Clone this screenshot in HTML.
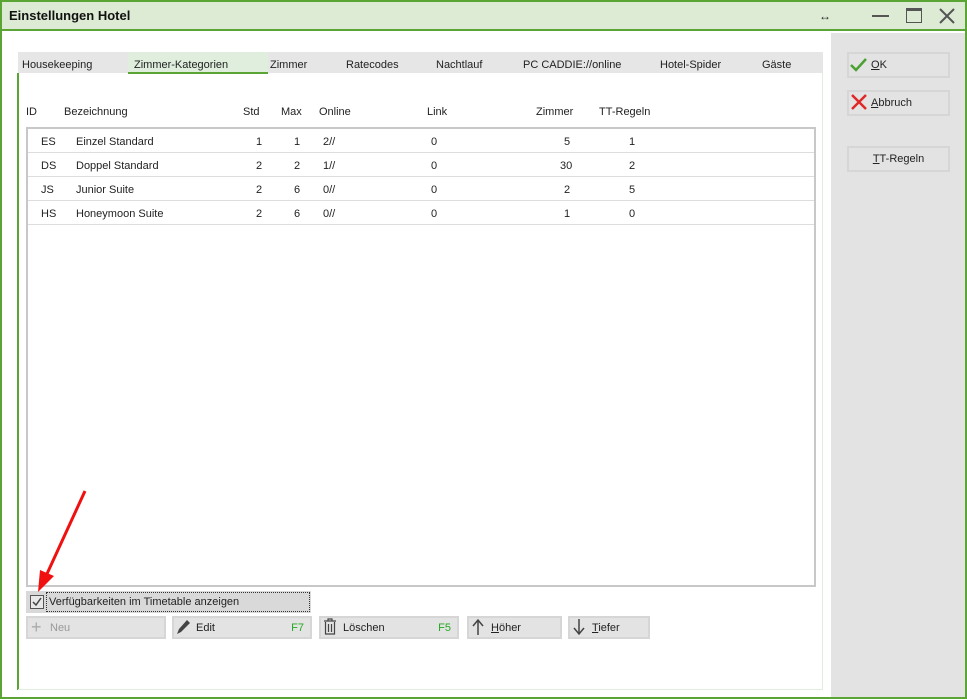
<!DOCTYPE html>
<html><head><meta charset="utf-8"><style>
*{margin:0;padding:0;box-sizing:border-box}
body{width:967px;height:699px;position:relative;overflow:hidden;font-family:"Liberation Sans",sans-serif;font-size:11px;color:#222;background:#fff}
.a{position:absolute;white-space:nowrap}
.btn{position:absolute;background:#e3e3e3;border:2px solid #d6d6d6;height:23px;line-height:20px;font-size:11px}
.row{position:absolute;left:0;width:786px;height:24px;border-bottom:1px solid #ddd}
.row span{position:absolute;top:7px}
u{text-decoration:underline}
</style></head><body>
<div class="a" style="left:0;top:0;width:967px;height:699px;border:2px solid #5aa534;"></div>
<div class="a" style="left:2px;top:2px;width:963px;height:29px;background:#ddebd5;border-bottom:2px solid #5aa534"></div>
<div class="a" style="left:9px;top:8px;font-size:13px;font-weight:bold;color:#111">Einstellungen Hotel</div>
<div class="a" style="left:819px;top:9px;font-size:12px;font-weight:bold">↔</div>
<div class="a" style="left:872px;top:15px;width:17px;height:2px;background:#555"></div>
<div class="a" style="left:906px;top:8px;width:16px;height:15px;border:1.5px solid #555;border-top-width:3px"></div>
<svg class="a" style="left:939px;top:8px" width="16" height="16"><path d="M1 1L15 15M15 1L1 15" stroke="#555" stroke-width="2"/></svg>
<div class="a" style="left:831px;top:33px;width:134px;height:664px;background:#e3e3e3"></div>
<div class="a" style="left:17px;top:73px;width:2px;height:617px;background:#5aa534"></div>
<div class="a" style="left:18px;top:689px;width:805px;height:1px;background:#dfeedd"></div>
<div class="a" style="left:822px;top:73px;width:1px;height:617px;background:#dfeedd"></div>
<div class="a" style="left:18px;top:52px;width:805px;height:21px;background:#e6e6e6"></div>
<div class="a" style="left:128px;top:52px;width:140px;height:22px;background:#dfeedd;border-bottom:2px solid #5aa534"></div>
<div class="a" style="left:22px;top:59px">Housekeeping</div>
<div class="a" style="left:134px;top:59px">Zimmer-Kategorien</div>
<div class="a" style="left:270px;top:59px">Zimmer</div>
<div class="a" style="left:346px;top:59px">Ratecodes</div>
<div class="a" style="left:436px;top:59px">Nachtlauf</div>
<div class="a" style="left:523px;top:59px">PC CADDIE://online</div>
<div class="a" style="left:660px;top:59px">Hotel-Spider</div>
<div class="a" style="left:762px;top:59px">Gäste</div>
<div class="a" style="left:26px;top:106px">ID</div>
<div class="a" style="left:64px;top:106px">Bezeichnung</div>
<div class="a" style="left:243px;top:106px">Std</div>
<div class="a" style="left:281px;top:106px">Max</div>
<div class="a" style="left:319px;top:106px">Online</div>
<div class="a" style="left:427px;top:106px">Link</div>
<div class="a" style="left:536px;top:106px">Zimmer</div>
<div class="a" style="left:599px;top:106px">TT-Regeln</div>
<div class="a" style="left:26px;top:127px;width:790px;height:460px;border:2px solid #c8c8c8;background:#fff">
<div class="row" style="top:0"><span style="left:13px">ES</span><span style="left:48px">Einzel Standard</span><span style="left:228px">1</span><span style="left:266px">1</span><span style="left:295px">2//</span><span style="left:403px">0</span><span style="left:536px">5</span><span style="left:601px">1</span></div>
<div class="row" style="top:24px"><span style="left:13px">DS</span><span style="left:48px">Doppel Standard</span><span style="left:228px">2</span><span style="left:266px">2</span><span style="left:295px">1//</span><span style="left:403px">0</span><span style="left:532px">30</span><span style="left:601px">2</span></div>
<div class="row" style="top:48px"><span style="left:13px">JS</span><span style="left:48px">Junior Suite</span><span style="left:228px">2</span><span style="left:266px">6</span><span style="left:295px">0//</span><span style="left:403px">0</span><span style="left:536px">2</span><span style="left:601px">5</span></div>
<div class="row" style="top:72px"><span style="left:13px">HS</span><span style="left:48px">Honeymoon Suite</span><span style="left:228px">2</span><span style="left:266px">6</span><span style="left:295px">0//</span><span style="left:403px">0</span><span style="left:536px">1</span><span style="left:601px">0</span></div>
</div>
<div class="a" style="left:26px;top:591px;width:285px;height:22px;background:#d9d9d9"></div>
<div class="a" style="left:46px;top:592px;width:264px;height:20px;border:1px dotted #333"></div>
<div class="a" style="left:30px;top:595px;width:14px;height:14px;border:1px solid #555;background:#e8e8e8"></div>
<svg class="a" style="left:31px;top:596px" width="12" height="12"><path d="M2 6L5 9L10 2" stroke="#444" stroke-width="1.5" fill="none"/></svg>
<div class="a" style="left:49px;top:596px">Verfügbarkeiten im Timetable anzeigen</div>
<svg class="a" style="left:30px;top:488px" width="60" height="110"><path d="M55 3L16 88" stroke="#f01010" stroke-width="3"/><path d="M8 104L10 82L24 88Z" fill="#f01010"/></svg>
<div class="btn" style="left:26px;top:616px;width:140px;color:#999;padding-left:22px">Neu</div>
<div class="a" style="left:31px;top:620px;color:#aaa;font-size:18px;line-height:14px">+</div>
<div class="btn" style="left:172px;top:616px;width:140px;padding-left:22px">Edit<span style="position:absolute;right:6px;color:#2a2">F7</span></div>
<svg class="a" style="left:175px;top:618px" width="16" height="18"><path d="M2 16L4 11L12 2L15 5L6 14Z" fill="#444"/></svg>
<div class="btn" style="left:319px;top:616px;width:140px;padding-left:22px">Löschen<span style="position:absolute;right:6px;color:#2a2">F5</span></div>
<svg class="a" style="left:322px;top:618px" width="16" height="18"><path d="M2 3H14M6 3V1H10V3M3.5 4V16H12.5V4M6.5 6V14M9.5 6V14" stroke="#444" stroke-width="1.2" fill="none"/></svg>
<div class="btn" style="left:467px;top:616px;width:95px;padding-left:22px"><u>H</u>öher</div>
<svg class="a" style="left:471px;top:618px" width="14" height="18"><path d="M7 17V3M2 8L7 2L12 8" stroke="#444" stroke-width="1.5" fill="none"/></svg>
<div class="btn" style="left:568px;top:616px;width:82px;padding-left:22px"><u>T</u>iefer</div>
<svg class="a" style="left:572px;top:618px" width="14" height="18"><path d="M7 1V15M2 10L7 16L12 10" stroke="#444" stroke-width="1.5" fill="none"/></svg>
<div class="btn" style="left:847px;top:52px;width:103px;height:26px;line-height:23px;padding-left:22px"><u>O</u>K</div>
<svg class="a" style="left:850px;top:57px" width="18" height="16"><path d="M1 8L6 13L16 2" stroke="#4aa030" stroke-width="2.5" fill="none"/></svg>
<div class="btn" style="left:847px;top:90px;width:103px;height:26px;line-height:23px;padding-left:22px"><u>A</u>bbruch</div>
<svg class="a" style="left:851px;top:94px" width="16" height="16"><path d="M1 1L15 15M15 1L1 15" stroke="#e02828" stroke-width="2.5"/></svg>
<div class="btn" style="left:847px;top:146px;width:103px;height:26px;line-height:23px;text-align:center"><u>T</u>T-Regeln</div>
</body></html>
